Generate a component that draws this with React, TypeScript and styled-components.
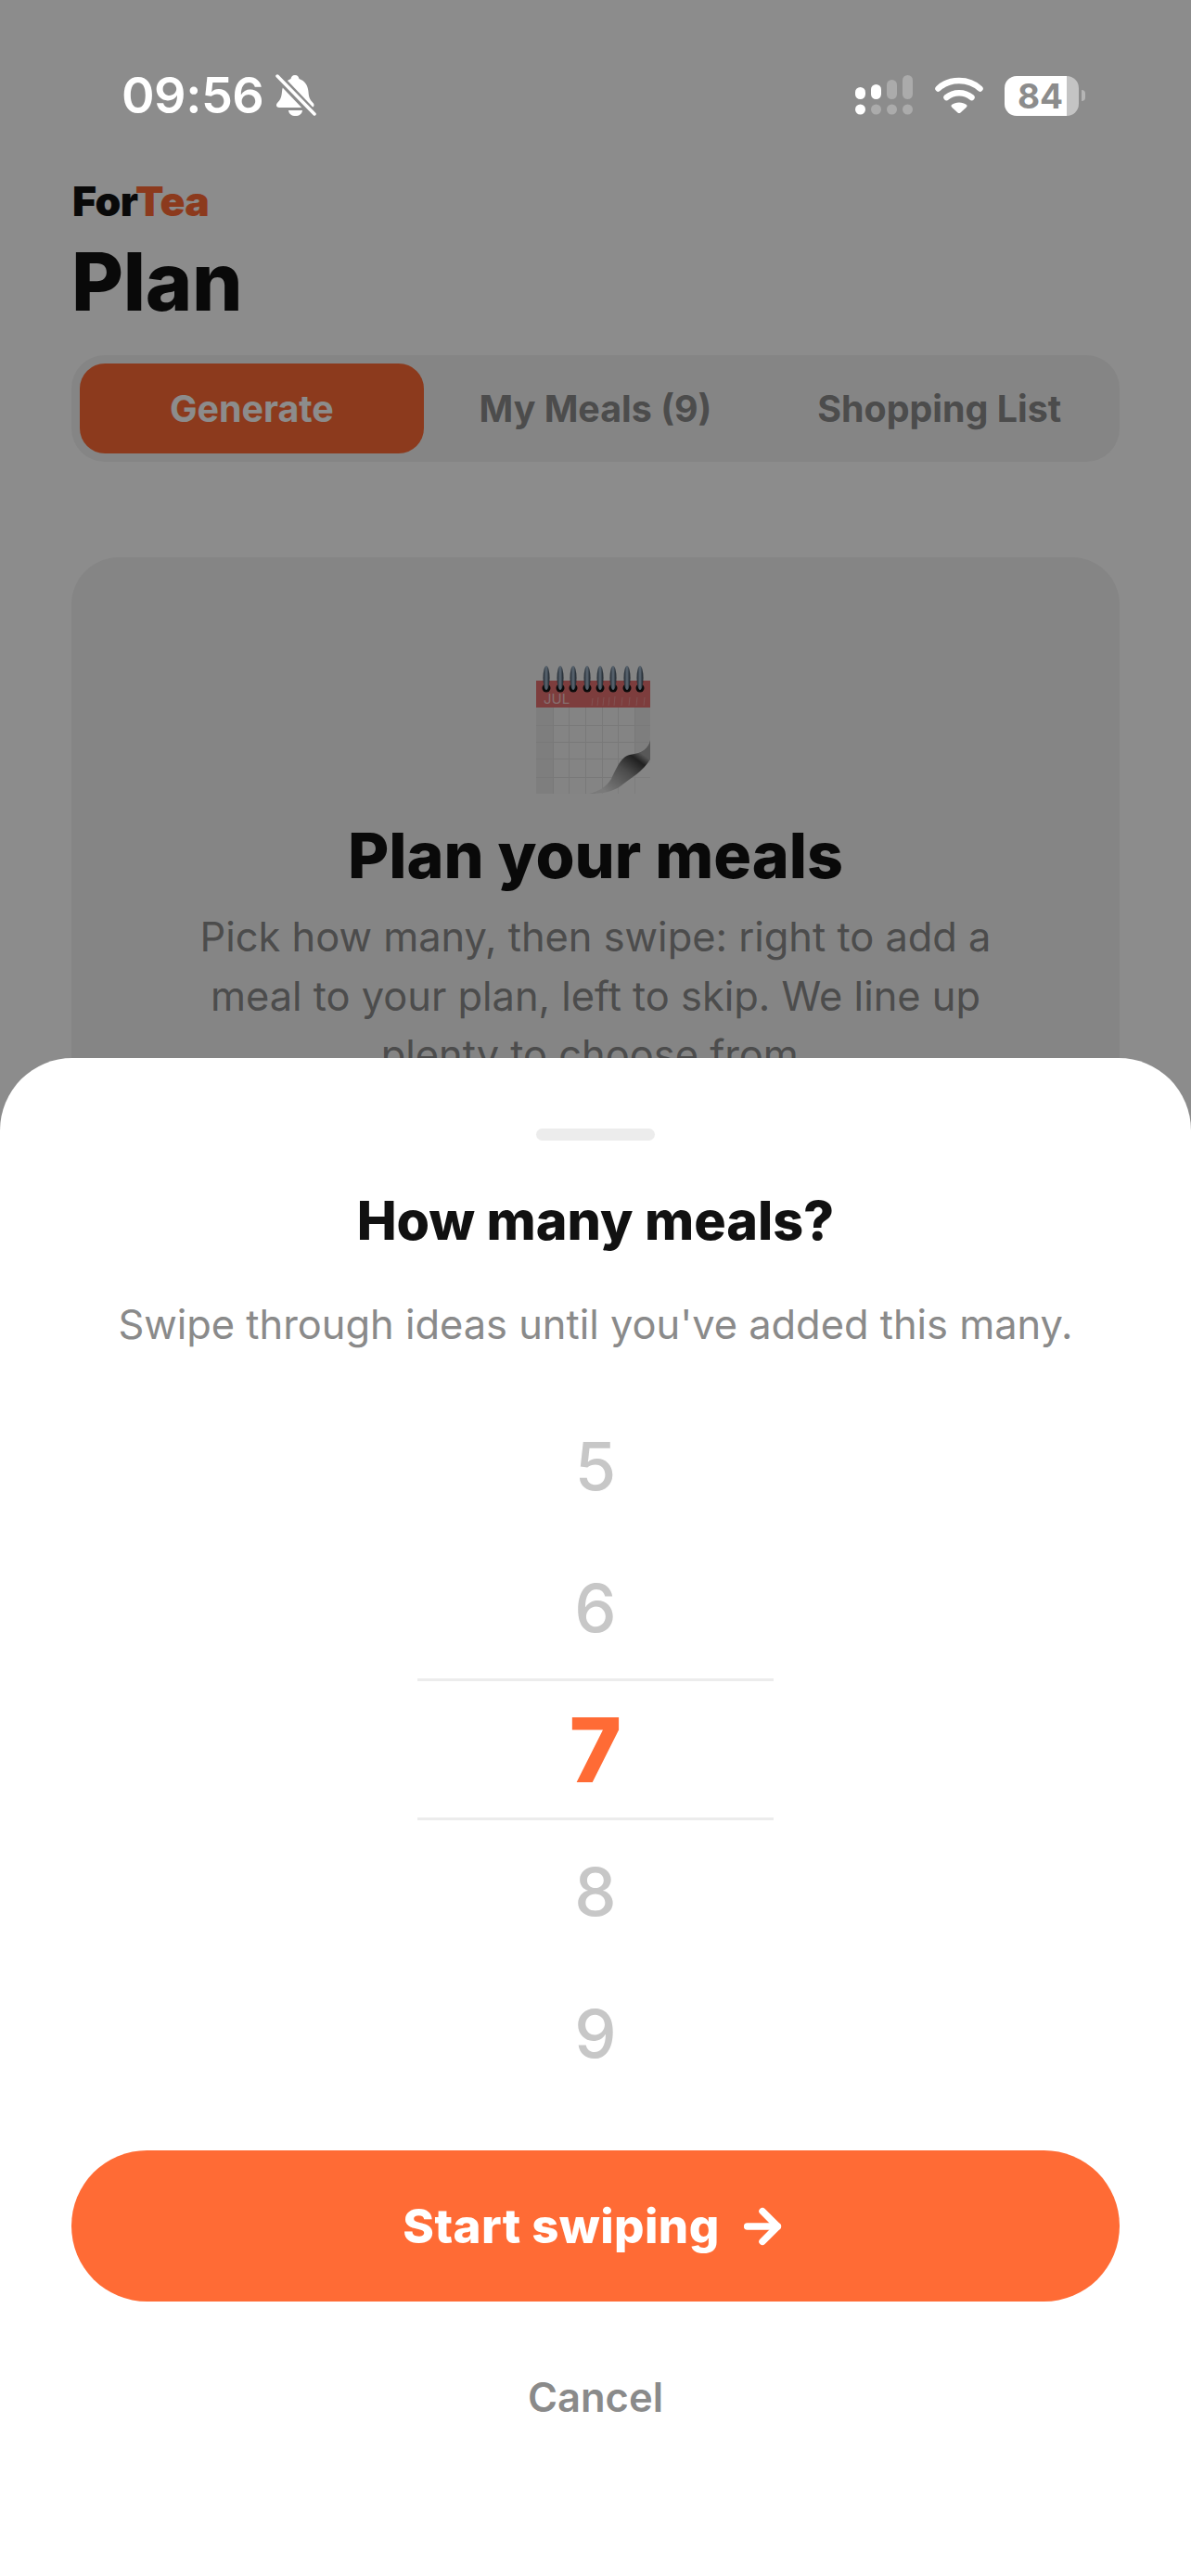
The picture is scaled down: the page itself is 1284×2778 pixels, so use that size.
import React from "react";
import styled, { createGlobalStyle } from "styled-components";
import { ArrowRight } from "lucide-react";

const Global = createGlobalStyle`
  html, body { margin: 0; padding: 0; background: #fff; }
  * { box-sizing: border-box; }
  body { font-family: Inter, "Liberation Sans", sans-serif; }
`;

const Screen = styled.div`
  position: relative;
  width: 1284px;
  height: 2778px;
  overflow: hidden;
  background: #fff;
`;

const StatusBar = styled.div`
  position: relative;
  z-index: 3;
  height: 192px;
  padding: 73px 113px 0 131px;
  display: flex;
  justify-content: space-between;
  align-items: flex-start;
`;

const TimeGroup = styled.div`
  display: flex;
  align-items: center;
  gap: 13px;
  height: 60px;
`;

const Time = styled.span`
  font-size: 54px;
  line-height: 60px;
  font-weight: 600;
  color: #fff;
  letter-spacing: -0.5px;
`;

const StatusIcons = styled.div`
  display: flex;
  align-items: center;
  gap: 23.5px;
  height: 60px;
`;

const Battery = styled.div`
  position: relative;
  width: 80px;
  height: 43px;
  margin-right: 8px;
  border-radius: 13px;
  background: linear-gradient(to right, #fff 0 67px, #c4c4c4 67px 100%);
  display: flex;
  align-items: center;
  padding-left: 14px;
  font-size: 37px;
  font-weight: 700;
  color: #8c8c8c;
  &::after {
    content: "";
    position: absolute;
    left: 83px;
    top: 15px;
    width: 4px;
    height: 12px;
    border-radius: 0 6px 6px 0;
    background: #b5b5b5;
  }
`;

const Main = styled.main`
  padding: 0 77px;
`;

const Logo = styled.div`
  padding-left: 1px;
  font-size: 44.5px;
  line-height: 50px;
  font-weight: 900;
  letter-spacing: -0.6px;
  color: #111;
`;

const LogoAccent = styled.span`
  color: #ff6b35;
`;

const PageTitle = styled.h1`
  margin: 12px 0 0;
  font-size: 86px;
  line-height: 100px;
  font-weight: 800;
  letter-spacing: -0.3px;
  color: #111;
`;

const Tabs = styled.div`
  margin-top: 29px;
  height: 115px;
  padding: 9px;
  display: grid;
  grid-template-columns: repeat(3, 1fr);
  border-radius: 36px;
  background: #f2f2f2;
`;

const Tab = styled.div<{ $active?: boolean }>`
  display: flex;
  align-items: center;
  justify-content: center;
  border-radius: 27px;
  font-size: 39.4px;
  font-weight: 700;
  color: ${(p) => (p.$active ? "#fff" : "#8a8a8a")};
  background: ${(p) => (p.$active ? "#ff6b35" : "transparent")};
`;

const Card = styled.section`
  margin-top: 103px;
  height: 800px;
  padding: 117px 48px 0;
  border-radius: 51px;
  background: #f2f2f2;
  display: flex;
  flex-direction: column;
  align-items: center;
`;

const CalendarArt = styled.svg`
  display: block;
  flex: none;
  margin-left: -4px;
`;

const CardTitle = styled.h2`
  margin: 22px 0 0;
  font-size: 68px;
  line-height: 80px;
  font-weight: 800;
  color: #111;
`;

const CardBody = styled.p`
  margin: 17px 0 0;
  width: 900px;
  text-align: center;
  font-size: 43.4px;
  line-height: 63.5px;
  color: #8a8a8a;
`;

const Overlay = styled.div`
  position: absolute;
  inset: 0;
  z-index: 2;
  background: rgba(0, 0, 0, 0.45);
`;

const Sheet = styled.section`
  position: absolute;
  left: 0;
  right: 0;
  top: 1141px;
  bottom: 0;
  z-index: 3;
  padding: 76px 77px 0;
  background: #fff;
  border-radius: 78px 78px 0 0;
  display: flex;
  flex-direction: column;
  align-items: center;
`;

const Handle = styled.div`
  width: 128px;
  height: 13px;
  border-radius: 7px;
  background: #ececec;
`;

const SheetTitle = styled.h2`
  margin: 53px 0 0;
  font-size: 57.4px;
  line-height: 66px;
  font-weight: 800;
  color: #111;
`;

const SheetHint = styled.p`
  margin: 49px 0 0;
  font-size: 43.4px;
  line-height: 60px;
  white-space: nowrap;
  color: #8a8a8a;
`;

const Picker = styled.div`
  margin-top: 46px;
  display: flex;
  flex-direction: column;
  align-items: center;
`;

const PickerRow = styled.div<{ $active?: boolean }>`
  width: 384px;
  height: 153px;
  display: flex;
  align-items: center;
  justify-content: center;
  font-size: ${(p) => (p.$active ? 96 : 72)}px;
  font-weight: ${(p) => (p.$active ? 800 : 500)};
  color: ${(p) => (p.$active ? "#ff6b35" : "#c7c7c7")};
  border-top: ${(p) => (p.$active ? "3px solid #ececec" : "none")};
  border-bottom: ${(p) => (p.$active ? "3px solid #ececec" : "none")};
`;

const StartButton = styled.button`
  margin-top: 50px;
  width: 1130px;
  height: 163px;
  flex: none;
  border: 0;
  border-radius: 82px;
  background: #ff6b35;
  color: #fff;
  display: flex;
  align-items: center;
  justify-content: center;
  gap: 18px;
  font-family: inherit;
  font-size: 51px;
  font-weight: 800;
  letter-spacing: 0.4px;
`;

const CancelButton = styled.button`
  margin-top: 73px;
  border: 0;
  background: none;
  padding: 0;
  font-family: inherit;
  font-size: 43.5px;
  line-height: 60px;
  font-weight: 600;
  color: #8a8a8a;
`;

const BellOffIcon = () => (
  <svg width="44" height="46" viewBox="0 0 44 46">
    <path
      fill="#fff"
      d="M21 1c3 0 4 2 4.500 4 6 2 9.500 7 10 14 .3 6 2 9 5 12 2 2 1 5-2 5H4c-3 0-4-3-2-5 3-3 4.500-6 5-12 .5-7 4-12 9.500-14C17 3 18 1 21 1z"
    />
    <path fill="#fff" d="M14 39h15c-.5 4-3.500 6-7.500 6S14.500 43 14 39z" />
    <path d="M3 3l39 41" stroke="#8c8c8c" strokeWidth="9" />
    <path d="M2 2l40 41" stroke="#fff" strokeWidth="3.500" strokeLinecap="round" />
  </svg>
);

const SignalIcon = () => {
  const bars = [
    { x: 0, y: 13, h: 13, on: true },
    { x: 17, y: 10, h: 16, on: true },
    { x: 34, y: 5, h: 21, on: false },
    { x: 51, y: 0, h: 26, on: false },
  ];
  return (
    <svg width="62" height="44" viewBox="0 0 62 44">
      {bars.map((b, i) => (
        <g key={b.x} fill={b.on ? "#fff" : "#ababab"}>
          <rect x={b.x} y={b.y} width="11" height={b.h} rx="5.500" />
          <circle cx={b.x + 5.5} cy="37" r="5.500" fill={i === 0 ? "#fff" : "#ababab"} />
        </g>
      ))}
    </svg>
  );
};

const WifiIcon = () => (
  <svg width="52" height="40" viewBox="0 0 52 40" fill="none">
    <path d="M3.500 12.500C15.500 1 36.500 1 48.500 12.500" stroke="#fff" strokeWidth="6.500" strokeLinecap="round" />
    <path d="M12.500 22C20 15.500 32 15.500 39.500 22" stroke="#fff" strokeWidth="6.500" strokeLinecap="round" />
    <path d="M18 30c4-3.500 12-3.500 16 0 1 1 .5 2-.5 3l-6 5.500c-.8.7-2.200.7-3 0l-6-5.500c-1-1-1.500-2-.5-3z" fill="#fff" />
  </svg>
);

const CalendarIllustration = () => {
  const rings = [11, 26, 40, 55, 69, 83, 98, 112];
  const cols = [18, 35, 53, 71, 88, 106];
  const rows = [64, 82, 100, 120];
  return (
    <CalendarArt width="124" height="142" viewBox="0 0 124 142">
      <defs>
        <linearGradient id="curl" x1="0.2" y1="0.9" x2="0.8" y2="0.2">
          <stop offset="0" stopColor="#dedede" />
          <stop offset="0.55" stopColor="#8a8a8a" />
          <stop offset="0.85" stopColor="#3c3c3c" />
          <stop offset="1" stopColor="#a0a0a0" />
        </linearGradient>
        <linearGradient id="ring" x1="0" y1="0" x2="1" y2="0">
          <stop offset="0" stopColor="#3d4a58" />
          <stop offset="0.5" stopColor="#a9bfd4" />
          <stop offset="1" stopColor="#2c3844" />
        </linearGradient>
      </defs>
      <rect x="0" y="45" width="123" height="93" fill="#f1f1f1" />
      <rect x="0" y="45" width="18" height="93" fill="#e6e6e6" />
      <rect x="106" y="45" width="17" height="60" fill="#e6e6e6" />
      {cols.map((x) => (
        <rect key={x} x={x} y="45" width="1" height="93" fill="#dcdcdc" />
      ))}
      {rows.map((y) => (
        <rect key={y} x="0" y={y} width="123" height="1" fill="#dcdcdc" />
      ))}
      <rect x="0" y="16" width="123" height="29" fill="#e37070" />
      {rings.map((x) => (
        <g key={x}>
          <circle cx={x} cy="24" r="4.500" fill="#141414" />
          <ellipse cx={x} cy="13" rx="3.500" ry="13" fill="url(#ring)" />
        </g>
      ))}
      <text x="8" y="41" fontFamily="Inter, sans-serif" fontSize="15" fill="#f4c9c9">JUL</text>
      <path d="M60 43l1-8M66 43l1-9M72 43l1-9M78 43l1-9M84 43l1-10M92 43l1-9M100 43l1-9M108 43l1-9M116 43l1-9" stroke="#f0a5a5" strokeWidth="1" opacity="0.7" />
      <path d="M123 75c-1 12-6 18-18 19-15 2-16 20-23 31-5 7-14 11-27 13h68z" fill="#f4f4f4" opacity="0.4" />
      <path d="M123 80c-2 9-8 14-22 16-10 2-15 16-20 26-5 8-12 13-24 16 14 0 26-2 35-9 10-8 23-15 31-28z" fill="url(#curl)" />
    </CalendarArt>
  );
};

export default function App() {
  return (
    <Screen>
      <Global />
      <StatusBar>
        <TimeGroup>
          <Time>09:56</Time>
          <BellOffIcon />
        </TimeGroup>
        <StatusIcons>
          <SignalIcon />
          <WifiIcon />
          <Battery>84</Battery>
        </StatusIcons>
      </StatusBar>
      <Main>
        <Logo>
          For<LogoAccent>Tea</LogoAccent>
        </Logo>
        <PageTitle>Plan</PageTitle>
        <Tabs>
          <Tab $active>Generate</Tab>
          <Tab>My Meals (9)</Tab>
          <Tab>Shopping List</Tab>
        </Tabs>
        <Card>
          <CalendarIllustration />
          <CardTitle>Plan your meals</CardTitle>
          <CardBody>
            Pick how many, then swipe: right to add a meal to your plan, left to skip. We line up plenty to choose from.
          </CardBody>
        </Card>
      </Main>
      <Overlay />
      <Sheet>
        <Handle />
        <SheetTitle>How many meals?</SheetTitle>
        <SheetHint>Swipe through ideas until you've added this many.</SheetHint>
        <Picker>
          {[5, 6, 7, 8, 9].map((n) => (
            <PickerRow key={n} $active={n === 7}>
              {n}
            </PickerRow>
          ))}
        </Picker>
        <StartButton>
          Start swiping
          <ArrowRight size={56} strokeWidth={3.2} />
        </StartButton>
        <CancelButton>Cancel</CancelButton>
      </Sheet>
    </Screen>
  );
}
